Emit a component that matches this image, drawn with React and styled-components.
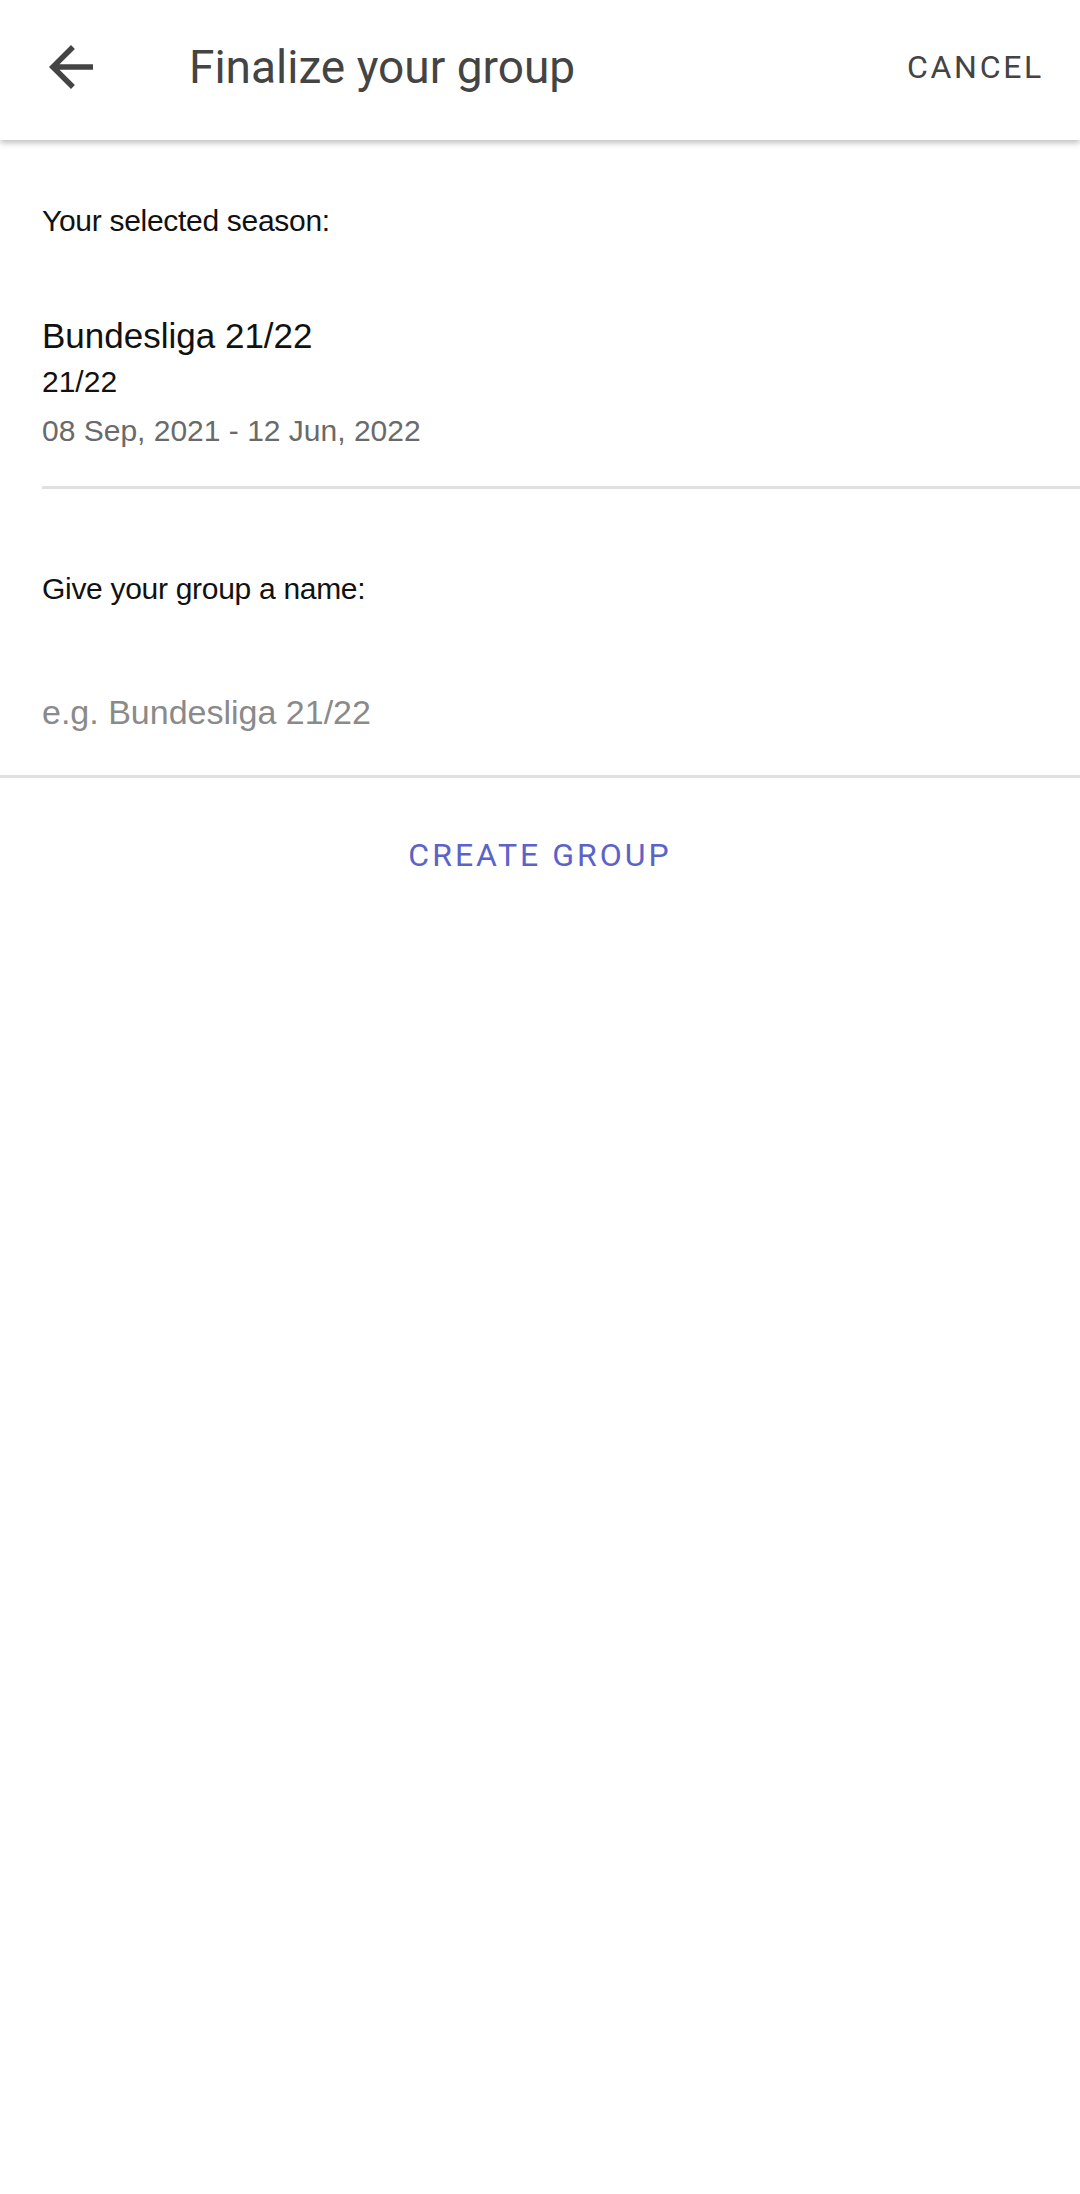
import React from "react";
import styled, { createGlobalStyle } from "styled-components";

const Global = createGlobalStyle`
  html, body { margin: 0; padding: 0; background: #ffffff; }
  body { font-family: "Liberation Sans", Arial, sans-serif; color: #111; }
  * { box-sizing: border-box; }
`;

const Page = styled.div`
  width: 1080px;
  min-height: 2194px;
  background: #fff;
`;

const Header = styled.header`
  height: 140px;
  display: flex;
  align-items: center;
  padding: 0 36px 6px 38px;
  background: #fff;
  box-shadow: 0 3px 6px rgba(0, 0, 0, 0.25);
  position: relative;
  z-index: 1;
`;

const BackButton = styled.button`
  width: 66px;
  height: 66px;
  padding: 0;
  border: none;
  background: transparent;
  display: flex;
  align-items: center;
  justify-content: center;
  color: #444;
`;

const Title = styled.h1`
  margin: 0 0 0 85px;
  flex: 1;
  font-family: Roboto, "Liberation Sans", sans-serif;
  font-weight: 400;
  font-size: 46px;
  color: #444;
`;

const TextButton = styled.button`
  border: none;
  background: transparent;
  padding: 0;
  font-family: Roboto, "Liberation Sans", sans-serif;
  font-size: 32px;
  letter-spacing: ${(p) => p.$spacing}px;
  color: ${(p) => p.$color || "#444"};
  line-height: 36px;
`;

const Section = styled.section`
  padding: ${(p) => p.$pt}px 0 0 42px;
`;

const Label = styled.div`
  font-size: 30px;
  line-height: 36px;
  color: #111;
  letter-spacing: -0.3px;
`;

const SeasonInfo = styled.div`
  margin-top: 74px;
  display: flex;
  flex-direction: column;
`;

const SeasonName = styled.div`
  font-size: 35px;
  line-height: 46px;
  color: #111;
`;

const SeasonShort = styled.div`
  font-size: 30px;
  line-height: 46px;
  color: #111;
`;

const SeasonDates = styled.div`
  font-size: 30px;
  line-height: 52px;
  color: #6a6a6a;
`;

const Divider = styled.div`
  height: 3px;
  background: #e0e0e0;
  margin-top: ${(p) => p.$mt}px;
`;

const NameInput = styled.input`
  display: block;
  width: 100%;
  margin-top: 85px;
  padding: 0 0 43px 42px;
  border: none;
  outline: none;
  font-family: "Liberation Sans", Arial, sans-serif;
  font-size: 34px;
  line-height: 40px;
  height: 83px;
  background: transparent;
  color: #111;
  &::placeholder { color: #8a8a8a; }
`;

const Actions = styled.div`
  display: flex;
  justify-content: center;
  padding-top: 59px;
`;

export default function App() {
  return (
    <Page>
      <Global />
      <Header>
        <BackButton aria-label="Back">
          <svg width="66" height="66" viewBox="0 0 24 24" fill="currentColor">
            <path d="M20 11H7.83l5.59-5.59L12 4l-8 8 8 8 1.41-1.41L7.83 13H20v-2z" />
          </svg>
        </BackButton>
        <Title>Finalize your group</Title>
        <TextButton $spacing={2.7}>CANCEL</TextButton>
      </Header>
      <Section $pt={63}>
        <Label>Your selected season:</Label>
        <SeasonInfo>
          <SeasonName>Bundesliga 21/22</SeasonName>
          <SeasonShort>21/22</SeasonShort>
          <SeasonDates>08 Sep, 2021 - 12 Jun, 2022</SeasonDates>
        </SeasonInfo>
        <Divider $mt={29} />
      </Section>
      <Section $pt={82}>
        <Label>Give your group a name:</Label>
      </Section>
      <NameInput placeholder="e.g. Bundesliga 21/22" />
      <Divider $mt={0} />
      <Actions>
        <TextButton $spacing={3} $color="#5c63c8">CREATE GROUP</TextButton>
      </Actions>
    </Page>
  );
}
